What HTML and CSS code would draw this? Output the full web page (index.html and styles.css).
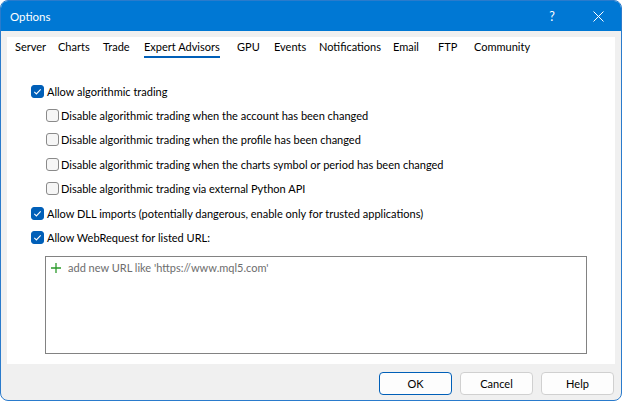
FILE: index.html
```html
<!DOCTYPE html>
<html>
<head>
<meta charset="utf-8">
<link rel="stylesheet" href="styles.css">
</head>
<body>
<div class="window">
  <div class="titlebar">
    <span class="title">Options</span>
    <div class="caption">
      <span class="cap-btn help">?</span>
      <span class="cap-btn">
        <svg width="11" height="11" viewBox="0 0 11 11"><path d="M0.5 0.5 L10.5 10.5 M10.5 0.5 L0.5 10.5" stroke="#fff" stroke-width="1" fill="none"/></svg>
      </span>
    </div>
  </div>
  <div class="client">
    <div class="panel">
      <div class="tabs">
        <span class="tab"><span class="tab-text">Server</span></span>
        <span class="tab"><span class="tab-text">Charts</span></span>
        <span class="tab"><span class="tab-text">Trade</span></span>
        <span class="tab active"><span class="tab-text">Expert Advisors</span></span>
        <span class="tab"><span class="tab-text">GPU</span></span>
        <span class="tab"><span class="tab-text">Events</span></span>
        <span class="tab"><span class="tab-text">Notifications</span></span>
        <span class="tab"><span class="tab-text">Email</span></span>
        <span class="tab"><span class="tab-text">FTP</span></span>
        <span class="tab"><span class="tab-text">Community</span></span>
      </div>
      <div class="options">
        <div class="row"><span class="cb checked"><svg width="13" height="13" viewBox="0 0 13 13"><path d="M3.3 6.8 L5.4 8.9 L9.7 4.3" stroke="#fff" stroke-width="1.1" fill="none"/></svg></span><span class="lbl">Allow algorithmic trading</span></div>
        <div class="row sub"><span class="cb"></span><span class="lbl">Disable algorithmic trading when the account has been changed</span></div>
        <div class="row sub"><span class="cb"></span><span class="lbl">Disable algorithmic trading when the profile has been changed</span></div>
        <div class="row sub"><span class="cb"></span><span class="lbl">Disable algorithmic trading when the charts symbol or period has been changed</span></div>
        <div class="row sub"><span class="cb"></span><span class="lbl">Disable algorithmic trading via external Python API</span></div>
        <div class="row"><span class="cb checked"><svg width="13" height="13" viewBox="0 0 13 13"><path d="M3.3 6.8 L5.4 8.9 L9.7 4.3" stroke="#fff" stroke-width="1.1" fill="none"/></svg></span><span class="lbl">Allow DLL imports (potentially dangerous, enable only for trusted applications)</span></div>
        <div class="row"><span class="cb checked"><svg width="13" height="13" viewBox="0 0 13 13"><path d="M3.3 6.8 L5.4 8.9 L9.7 4.3" stroke="#fff" stroke-width="1.1" fill="none"/></svg></span><span class="lbl">Allow WebRequest for listed URL:</span></div>
      </div>
      <div class="urlbox">
        <div class="url-row">
          <svg class="plus" width="10" height="10" viewBox="0 0 10 10"><path d="M5 0 V10 M0 5 H10" stroke="#2a9a2a" stroke-width="1.3" fill="none"/></svg>
          <span class="url-hint">add new URL like 'https://www.mql5.com'</span>
        </div>
      </div>
    </div>
    <div class="buttons">
      <button class="btn default">OK</button>
      <button class="btn">Cancel</button>
      <button class="btn">Help</button>
    </div>
  </div>
</div>
</body>
</html>
```
FILE: styles.css
```css
html, body {
  margin: 0;
  padding: 0;
  background: #ffffff;
}
body {
  font-family: Lato, "Noto Sans", sans-serif;
  font-size: 11px;
  color: #000;
}
.window {
  width: 622px;
  height: 401px;
  box-sizing: border-box;
  border: 1px solid #2a7bcc;
  border-radius: 8px;
  overflow: hidden;
  display: flex;
  flex-direction: column;
  background: #f0f0f0;
}
.titlebar {
  height: 30px;
  flex: none;
  background: #0078d4;
  display: flex;
  align-items: center;
  justify-content: space-between;
  color: #fff;
}
.title {
  padding-left: 9px;
  font-size: 11.5px;
}
.caption {
  display: flex;
  height: 100%;
}
.cap-btn {
  width: 46px;
  height: 100%;
  display: flex;
  align-items: center;
  justify-content: center;
  font-size: 12.5px;
}
.client {
  flex: 1;
  display: flex;
  flex-direction: column;
  padding: 6px 6px 0 6px;
}
.panel {
  height: 327px;
  background: #fff;
  display: flex;
  flex-direction: column;
}
.tabs {
  display: flex;
  padding: 2px 0 0 8px;
}
.tab {
  flex: none;
}
.tab:nth-child(1) { width: 43px; }
.tab:nth-child(2) { width: 45px; }
.tab:nth-child(3) { width: 41px; }
.tab:nth-child(4) { width: 93px; }
.tab:nth-child(5) { width: 37px; }
.tab:nth-child(6) { width: 45px; }
.tab:nth-child(7) { width: 74px; }
.tab:nth-child(8) { width: 45px; }
.tab:nth-child(9) { width: 36px; }
.tab-text {
  display: inline-block;
  line-height: 16px;
  padding-bottom: 1px;
  border-bottom: 2px solid transparent;
}
.tab.active .tab-text {
  border-bottom-color: #005fb8;
}
.options {
  margin-top: 21px;
  padding-left: 24px;
  display: flex;
  flex-direction: column;
}
.row {
  height: 24.4px;
  display: flex;
  align-items: center;
}
.row.sub {
  padding-left: 15px;
}
.cb {
  width: 13px;
  height: 13px;
  box-sizing: border-box;
  border: 1px solid #8a8a8a;
  border-radius: 3px;
  background: #f6f6f6;
  flex: none;
  margin-right: 2px;
  display: flex;
}
.cb.checked {
  border-color: #005fb8;
  background: #005fb8;
  margin-right: 3px;
}
.cb.checked svg {
  margin: -1px;
}
.urlbox {
  margin: 6px 0 0 38px;
  width: 542px;
  height: 98px;
  box-sizing: border-box;
  border: 1px solid #828282;
}
.url-row {
  display: flex;
  align-items: center;
  height: 20px;
  margin-top: 1px;
  padding-left: 5px;
}
.plus {
  margin-right: 7px;
}
.url-hint {
  color: #6d6d6d;
}
.buttons {
  display: flex;
  justify-content: flex-end;
  gap: 8px;
  padding: 8px 1px 0 0;
}
.btn {
  width: 73px;
  height: 23px;
  box-sizing: border-box;
  border: 1px solid #d0d0d0;
  border-radius: 4px;
  background: #fdfdfd;
  font-family: inherit;
  font-size: 11px;
  color: #000;
  padding: 0;
}
.btn.default {
  border-color: #005fb8;
}
```
